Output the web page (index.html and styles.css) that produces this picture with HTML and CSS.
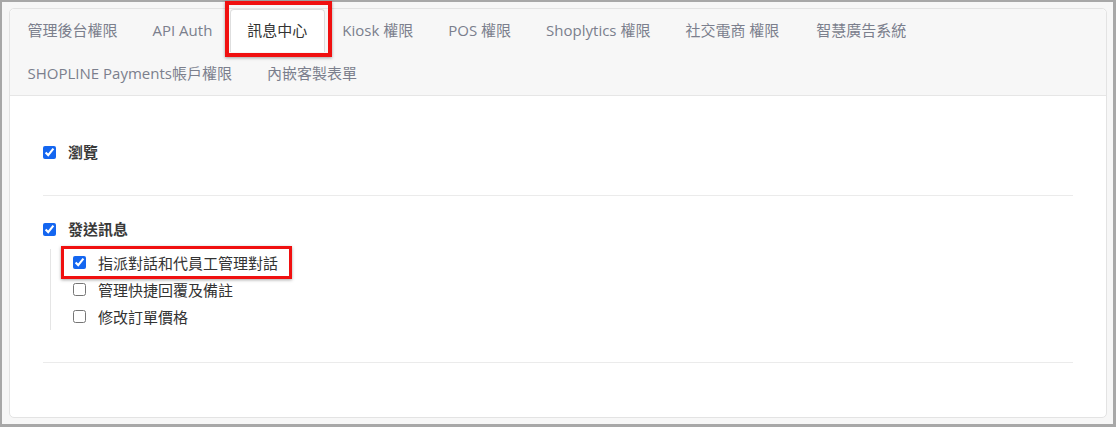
FILE: index.html
```html
<!DOCTYPE html>
<html lang="zh-Hant">
<head>
<meta charset="utf-8">
<title>權限設定</title>
<link rel="stylesheet" href="styles.css">
</head>
<body>
<div class="frame">
  <div class="card">
    <ul class="tabs">
      <li class="tab"><a>管理後台權限</a></li>
      <li class="tab"><a>API Auth</a></li>
      <li class="tab active mark"><a>訊息中心</a></li>
      <li class="tab"><a>Kiosk 權限</a></li>
      <li class="tab"><a>POS 權限</a></li>
      <li class="tab"><a>Shoplytics 權限</a></li>
      <li class="tab wide"><a>社交電商 權限</a></li>
      <li class="tab"><a>智慧廣告系統</a></li>
      <li class="tab"><a>SHOPLINE Payments帳戶權限</a></li>
      <li class="tab"><a>內嵌客製表單</a></li>
    </ul>
    <div class="content">
      <div class="group">
        <label class="row main"><input type="checkbox" checked><span>瀏覽</span></label>
      </div>
      <div class="group">
        <label class="row main"><input type="checkbox" checked><span>發送訊息</span></label>
        <ul class="sub">
          <li><label class="row mark"><input type="checkbox" checked><span>指派對話和代員工管理對話</span></label></li>
          <li><label class="row"><input type="checkbox"><span>管理快捷回覆及備註</span></label></li>
          <li><label class="row"><input type="checkbox"><span>修改訂單價格</span></label></li>
        </ul>
      </div>
    </div>
  </div>
</div>
</body>
</html>
```
FILE: styles.css
```css
* { box-sizing: border-box; }
html, body { margin: 0; padding: 0; }
body {
  font-family: "Open Sans", "Noto Sans CJK TC", sans-serif;
  font-size: 15px;
  color: #333;
  background: #f7f7f7;
}
.frame {
  width: 1116px;
  height: 427px;
  border: 2px solid #a8a8a8;
  border-right-width: 3px;
  border-bottom-width: 3px;
  background: #f7f7f7;
  padding: 6px 6px 6px 7px;
  display: flex;
}
.card {
  flex: 1;
  display: flex;
  flex-direction: column;
  border: 1px solid #e3e3e3;
  border-radius: 5px;
  background: #fff;
}
.tabs {
  list-style: none;
  margin: 0;
  padding: 0;
  display: flex;
  flex-wrap: wrap;
  background: #f7f7f7;
  border-bottom: 1px solid #e6e6e6;
  border-radius: 5px 5px 0 0;
}
.tab {
  position: relative;
  height: 43px;
}
.tab a {
  display: block;
  height: 43px;
  padding: 0 16.5px;
  color: #7b7f8d;
  white-space: nowrap;
  border: 1px solid transparent;
  border-bottom: 0;
  line-height: 41px;
}
.tab.wide { margin-right: 2px; }
.tab.active a {
  background: #fff;
  color: #333;
  border-color: #dedede;
  border-radius: 4px 4px 0 0;
}
.mark { position: relative; }
.tab.mark::after {
  content: "";
  position: absolute;
  top: -8px;
  left: -5px;
  right: -7px;
  bottom: -5px;
  border: 4px solid #f01010;
  box-shadow: 0 1px 3px rgba(0,0,0,0.35);
  pointer-events: none;
}
.content {
  flex: 1;
  padding: 23px 33px 0;
}
.group {
  padding: 22px 0 32px;
  border-bottom: 1px solid #ebebeb;
}
.row {
  display: inline-flex;
  align-items: center;
  height: 22px;
  line-height: 22px;
}
.row input {
  margin: 0 12px 0 0;
  width: 13px;
  height: 13px;
  accent-color: #1466f0;
}
.row.main span { font-weight: 700; color: #3a3a3a; }
.sub {
  list-style: none;
  margin: 9px 0 0 7px;
  padding: 0 0 0 22px;
  border-left: 1px solid #e5e5e5;
}
.sub li {
  height: 27px;
  display: flex;
  align-items: center;
}
.sub .row.mark::after {
  content: "";
  position: absolute;
  top: -6px;
  left: -12px;
  right: -14px;
  bottom: -5px;
  border: 3px solid #f01010;
  box-shadow: 0 1px 3px rgba(0,0,0,0.35);
  pointer-events: none;
}
```
